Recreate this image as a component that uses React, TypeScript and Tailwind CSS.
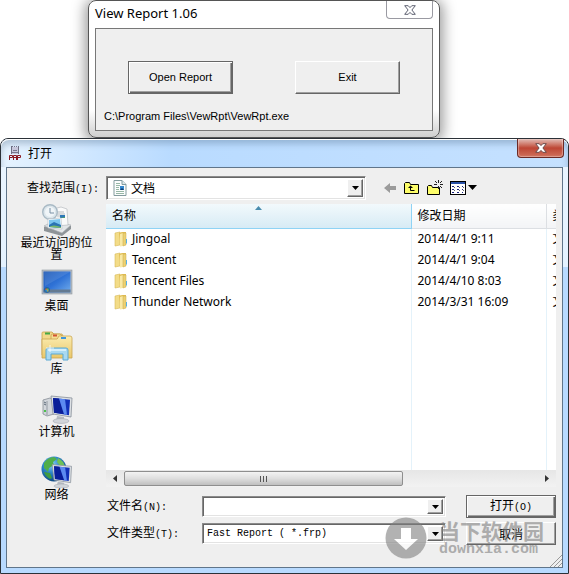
import { useState } from "react";
import type { ReactNode } from "react";

const folders = [
  { name: "Jingoal", date: "2014/4/1 9:11" },
  { name: "Tencent", date: "2014/4/1 9:04" },
  { name: "Tencent Files", date: "2014/4/10 8:03" },
  { name: "Thunder Network", date: "2014/3/31 16:09" },
];

const places = [
  { label: "最近访问的位置", icon: <RecentIcon /> },
  { label: "桌面", icon: <DesktopIcon /> },
  { label: "库", icon: <LibraryIcon /> },
  { label: "计算机", icon: <ComputerIcon /> },
  { label: "网络", icon: <NetworkIcon /> },
];

const raised =
  "border border-t-white border-l-white border-r-[#666] border-b-[#666] bg-[#efefef] shadow-[inset_-1px_-1px_0_#a0a0a0]";
const raisedDefault =
  "border border-[#666] bg-[#efefef] shadow-[inset_1px_1px_0_#fff,inset_-1px_-1px_0_#666,inset_-2px_-2px_0_#a0a0a0]";
const sunken =
  "border border-t-[#8a8a8a] border-l-[#8a8a8a] border-r-white border-b-white bg-white shadow-[inset_1px_1px_0_#666,inset_-1px_-1px_0_#e3e3e3]";

function RecentIcon() {
  return (
    <svg width="32" height="32" viewBox="0 0 32 32" className="shrink-0">
      <path d="M3 23 L11 19 L30 22 L30 25 L21 32 L3 27Z" fill="#8e9498" />
      <path d="M3 22 L11 18 L30 21 L21 29Z" fill="#e3e6e8" stroke="#a3a8ac" strokeWidth=".6" />
      <path d="M12 5 L20 3 L26 5 L27 21 L14 22Z" fill="#fafafa" stroke="#b8bcc0" strokeWidth=".7" />
      <path d="M16 8h7M16 10h8M16 12h8" stroke="#b5bbc0" />
      <path d="M19 11h5v3h-5z" fill="#2d78b8" />
      <path d="M19 14l5-1v1z" fill="#5ba35a" />
      <circle cx="9" cy="8" r="7.3" fill="#dbe5eb" stroke="#a9bac5" strokeWidth="1.4" />
      <circle cx="9" cy="8" r="5" fill="#f0f5f8" />
      <path d="M9 4v5h4" fill="none" stroke="#7890a5" strokeWidth="1" />
      <path d="M7 15 L20 14 L21 25 L7 24Z" fill="#fff" stroke="#b0bac2" strokeWidth=".6" />
      <path d="M8 16 L19 15 L20 24 L8 23Z" fill="#7cc6ef" />
      <path d="M8 21 L13 18 L20 21 L20 24 L8 23Z" fill="#2a74b3" />
      <path d="M8 23 Q12 20 20 23 L20 24Z" fill="#79b968" />
    </svg>
  );
}

function DesktopIcon() {
  return (
    <svg width="32" height="32" viewBox="0 0 32 32" className="shrink-0">
      <defs>
        <linearGradient id="desk" x1="0" y1="0" x2="1" y2="1">
          <stop offset="0" stopColor="#1d58b4" />
          <stop offset=".5" stopColor="#2f72d6" />
          <stop offset="1" stopColor="#71acec" />
        </linearGradient>
      </defs>
      <rect x="1" y="3" width="30" height="24" fill="#b6bcc4" stroke="#8e979f" strokeWidth=".6" />
      <rect x="2.5" y="4.5" width="27" height="21" fill="url(#desk)" />
      <path d="M3 5h26L4 19z" fill="#fff" opacity=".1" />
      <rect x="2.5" y="22.5" width="27" height="3" fill="#647a91" />
      <circle cx="6" cy="23" r="2.8" fill="#1b5c96" />
      <path d="M4.5 21.5h1.3V23H4.5z" fill="#f07432" />
      <path d="M6.2 21.5h1.3V23H6.2z" fill="#83cc48" />
      <path d="M4.5 23.3h1.3v1.2H4.5z" fill="#48b0f0" />
      <path d="M6.2 23.3h1.3v1.2H6.2z" fill="#fad440" />
    </svg>
  );
}

function LibraryIcon() {
  return (
    <svg width="32" height="32" viewBox="0 0 32 32" className="shrink-0">
      <defs>
        <linearGradient id="lib" x1="0" y1="0" x2="0" y2="1">
          <stop offset="0" stopColor="#fbecb0" />
          <stop offset="1" stopColor="#e9c76a" />
        </linearGradient>
      </defs>
      <path d="M1 3q0-1 1-1h9l2 2h8l1 2v19H1z" fill="#f2d98b" stroke="#c8a24a" strokeWidth=".8" />
      <rect x="4" y="2.5" width="5" height="2" fill="#45a845" />
      <path d="M10 6q0-2 1-2h8l2 2v18H10z" fill="#f6dd93" stroke="#c8a24a" strokeWidth=".8" />
      <rect x="12" y="4.5" width="4" height="2" fill="#d25434" />
      <path d="M17 8q0-2 1-2h11q2 0 2 2v20H1V9h15z" fill="url(#lib)" stroke="#c9a450" strokeWidth=".8" />
      <rect x="20" y="7" width="5" height="2" fill="#3f96dc" />
      <path d="M5 30V20q0-2 2-2h18q2 0 2 2v10h-5v-6H10v6z" fill="#a9d9f1" stroke="#5ba9d4" />
      <path d="M7 20h18" stroke="#e8f8ff" strokeWidth="1.4" />
      <path d="M9 15v7M5 18h8" stroke="#fff" opacity=".8" />
    </svg>
  );
}

function Monitor() {
  return (
    <g>
      <path d="M16 23l7 1v4h-8z" fill="#b5bac1" />
      <ellipse cx="20" cy="28" rx="8" ry="2.4" fill="#d1d5da" stroke="#a2a8b0" strokeWidth=".6" />
      <path d="M10 3l21 2-1 19-18-3z" fill="#dde1e5" stroke="#868e98" strokeWidth=".8" />
      <path d="M12 5l17 1.700-1 15.500-15-2.500z" fill="#1230b8" />
      <path d="M12 5l6 .6 5 15.500-10-1.400z" fill="#0a1e98" />
      <path d="M18 5.600l6 .6 2 15.500-3-.5z" fill="#5c8af0" />
    </g>
  );
}

function ComputerIcon() {
  return (
    <svg width="32" height="32" viewBox="0 0 32 32" className="shrink-0">
      <path d="M2 7l7-2 4 2v14l-7 2-4-2z" fill="#d2d6db" stroke="#868d95" strokeWidth=".8" />
      <path d="M6 8v14" stroke="#9299a2" />
      <path d="M3 9l2 1M3 11l2 1" stroke="#596775" />
      <rect x="3" y="17" width="2" height="2" fill="#4bc04b" />
      <Monitor />
    </svg>
  );
}

function NetworkIcon() {
  return (
    <svg width="32" height="32" viewBox="0 0 32 32" className="shrink-0">
      <defs>
        <radialGradient id="globe" cx=".4" cy=".3" r=".7">
          <stop offset="0" stopColor="#8bd3f8" />
          <stop offset=".5" stopColor="#2c84c8" />
          <stop offset="1" stopColor="#104a85" />
        </radialGradient>
      </defs>
      <circle cx="13" cy="13" r="12.5" fill="url(#globe)" />
      <path d="M3 7q4-6 10-6l3 2-4 3 1 3-5 3-1 4-4-4z" fill="#51ae49" />
      <path d="M17 2q6 3 7 9l-5-1-3-4z" fill="#6fc157" />
      <path d="M3 16l6 1 2 5-2 1q-5-3-6-7z" fill="#3f9b41" />
      <g transform="translate(2 6) scale(.92 .86)">
        <Monitor />
      </g>
    </svg>
  );
}

function FolderIcon() {
  return (
    <svg width="14" height="16" viewBox="0 0 14 16" className="shrink-0">
      <path d="M1 2l5-1v13l-5 1z" fill="#f3dc88" stroke="#d7b958" strokeWidth=".6" />
      <path d="M5 2l3-1h4v12l-5 2z" fill="#e2bf55" />
      <path d="M6 3l3-1v13l-3 .5z" fill="#f9e9a5" />
      <path d="M9 2h3v12l-3 1z" fill="#ecd173" stroke="#cbaa48" strokeWidth=".5" />
      <path d="M12 8h1v4l-1 1z" fill="#54aee5" />
    </svg>
  );
}

function DocumentIcon() {
  return (
    <svg width="14" height="16" viewBox="0 0 14 16" className="shrink-0">
      <path d="M1 .5h8l4 4v11H1z" fill="#fbfdfd" stroke="#839b9e" />
      <path d="M9 .5v4h4" fill="#dce8ea" stroke="#839b9e" />
      <path d="M3 3.500h4M3 5.500h4M3 7.500h3M3 9.500h3M3 11.500h8M3 13.500h8" stroke="#97b7a6" />
      <rect x="7" y="6" width="4" height="4" fill="#3487cc" />
      <path d="M7 10l2-2 2 2z" fill="#123d70" />
    </svg>
  );
}

function AppIcon() {
  return (
    <svg width="13" height="16" viewBox="0 0 13 16">
      <path d="M2 1h1v8H2zM9 1h1v8H9z" fill="#6f6f82" />
      <rect x="3" y="2" width="6" height="7" fill="#c8c8dc" />
      <path d="M3 1.500h1M5 1.500h1M7 1.500h1M3 7.500h6M4 5.500h4" stroke="#77778c" />
      <path
        d="M.5 15v-4.500h3v2h-3M4.500 15v-4.500h3V15M4.500 12.500h3M8.500 15v-4.500h3v2h-3"
        fill="none"
        stroke="#8b1820"
      />
    </svg>
  );
}

function BackIcon() {
  return (
    <svg width="13" height="12" viewBox="0 0 13 12">
      <path d="M0 6l6-5v3h6v4H6v3z" fill="#9b9b9b" />
    </svg>
  );
}

function UpIcon() {
  return (
    <svg width="16" height="14" viewBox="0 0 16 14">
      <path d="M.5 12.500v-10l1-1h4l1 2h8v9z" fill="#fdfd6a" stroke="#000" />
      <path d="M10.500 9.500h-4V6" fill="none" stroke="#000" />
      <path d="M4 7l2.500-2.500L9 7z" fill="#000" />
    </svg>
  );
}

function NewFolderIcon() {
  return (
    <svg width="16" height="16" viewBox="0 0 16 16">
      <path d="M.5 14.500v-8l1-1h3l1 2h7v7z" fill="#fdfd6a" stroke="#000" />
      <path d="M11.500 0v3M11.500 6v3M7 4.500h3M13 4.500h3M8 1l2 2M15 1l-2 2M13 6l2 2" stroke="#222" />
    </svg>
  );
}

function ViewIcon() {
  return (
    <svg width="28" height="14" viewBox="0 0 28 14">
      <rect x=".5" y=".5" width="15" height="13" fill="#fff" stroke="#000" />
      <rect x="1" y="1" width="14" height="2" fill="#2a52a8" />
      <path
        d="M2 5.500h2M7 5.500h2M12 5.500h1M2 8.500h2M7 8.500h2M12 8.500h1M2 11.500h2M7 11.500h2M12 11.500h1"
        stroke="#1a237e"
      />
      <path d="M4 6.500h1M9 6.500h1M13 6.500h1M4 9.500h1M9 9.500h1M13 9.500h1" stroke="#666" />
      <path d="M18 4h9l-4.500 5z" fill="#000" />
    </svg>
  );
}

function CloseMark({ stroke, fill }: { stroke: string; fill: string }) {
  return (
    <svg width="12" height="10" viewBox="0 0 12 10">
      <path
        d="M.7.700h3.500L6 2.600 7.800.7h3.500L7.900 5l3.400 4.300H7.800L6 7.400 4.200 9.300H.7L4.100 5z"
        fill={fill}
        stroke={stroke}
      />
    </svg>
  );
}

function DropArrow() {
  return (
    <span
      className={`pointer-events-none my-0.5 mr-0.5 flex w-4 shrink-0 items-center justify-center ${raised}`}
    >
      <svg width="7" height="4" viewBox="0 0 7 4">
        <path d="M0 0h7L3.500 4z" fill="#000" />
      </svg>
    </span>
  );
}

function Hot({ letter }: { letter: string }) {
  return <span className="font-['Liberation_Mono',monospace] text-[10px]">({letter})</span>;
}

function FieldLabel({ id, text, letter }: { id: string; text: string; letter: string }) {
  return (
    <label htmlFor={id} className="whitespace-nowrap">
      {text}
      <Hot letter={letter} />
      <span className="font-['Liberation_Mono',monospace] text-[10px]">:</span>
    </label>
  );
}

function IconButton({ label, children }: { label: string; children: ReactNode }) {
  return (
    <button type="button" aria-label={label}>
      {children}
    </button>
  );
}

function ReportWindow() {
  return (
    <section className="ml-[88px] flex h-[138px] w-[352px] flex-col rounded-lg border border-[#555] bg-linear-to-b from-white from-80% to-[#cfcfcf] px-1.5 pb-1.5 shadow-[0_2px_14px_3px_rgba(0,0,0,0.4)]">
      <header className="flex h-[27px] shrink-0 items-start justify-between">
        <h1 className="pt-1 font-['Noto_Sans',sans-serif] text-[13px] leading-4 text-black">
          View Report 1.06
        </h1>
        <button
          type="button"
          aria-label="Close"
          className="flex h-[18px] w-[47px] items-center justify-center rounded-b border border-t-0 border-[#9a9aa2]"
        >
          <CloseMark stroke="#5d6070" fill="#fff" />
        </button>
      </header>
      <div className="flex-1 border border-[#777] bg-[#efefef] px-2 pt-8 font-['Liberation_Sans',sans-serif] text-[11px] text-black">
        <div className="flex justify-between pr-6 pl-6">
          <button type="button" className={`h-[33px] w-[105px] ${raisedDefault}`}>
            Open Report
          </button>
          <button type="button" className={`h-[33px] w-[105px] ${raised}`}>
            Exit
          </button>
        </div>
        <p className="mt-3.5 leading-4 whitespace-nowrap">C:\Program Files\VewRpt\VewRpt.exe</p>
      </div>
    </section>
  );
}

function FileTable() {
  return (
    <div>
      <table className="h-[266px] w-full table-fixed border-collapse bg-white text-left font-['Noto_Sans','Noto_Sans_CJK_SC',sans-serif] text-[12px] leading-4 text-black">
        <colgroup>
          <col />
          <col className="w-[135px]" />
          <col className="w-[10px]" />
        </colgroup>
        <thead>
          <tr className="h-6">
            <th className="relative border-r border-b border-[#8fd3f5] bg-linear-to-b from-[#f2f9fc] to-[#d7ebf5] pl-1.5 font-normal">
              名称
              <svg width="7" height="4" viewBox="0 0 7 4" className="absolute top-0.5 left-[49%]">
                <path d="M0 4l3.500-4L7 4z" fill="#4a8cae" />
              </svg>
            </th>
            <th className="border-r border-b border-[#dcdfe3] bg-linear-to-b from-white to-[#f3f4f6] pl-1.5 font-normal">
              修改日期
            </th>
            <th className="overflow-hidden border-b border-[#dcdfe3] bg-linear-to-b from-white to-[#f3f4f6] pl-1.5 font-normal whitespace-nowrap">
              类型
            </th>
          </tr>
        </thead>
        <tbody>
          {folders.map((folder) => (
            <tr key={folder.name} className="h-[21px]">
              <td className="border-r border-[#e4f2fa] pl-2">
                <span className="flex items-center gap-1">
                  <FolderIcon />
                  {folder.name}
                </span>
              </td>
              <td className="border-r border-[#e4f2fa] pl-1.5">{folder.date}</td>
              <td className="overflow-hidden pl-1.5 whitespace-nowrap">文件夹</td>
            </tr>
          ))}
          <tr>
            <td className="border-r border-[#e4f2fa]" />
            <td className="border-r border-[#e4f2fa]" />
            <td />
          </tr>
        </tbody>
      </table>
      <div className="flex h-[17px] items-stretch bg-linear-to-b from-[#e6e6e6] to-[#f2f2f2]">
        <button type="button" aria-label="Scroll left" className="flex w-[18px] items-center justify-center">
          <svg width="4" height="7" viewBox="0 0 4 7">
            <path d="M4 0v7L0 3.500z" fill="#333" />
          </svg>
        </button>
        <div className="flex-1">
          <div className="my-px flex h-[15px] w-[67.5%] items-center justify-center gap-0.5 rounded-xs border border-[#8e8e8e] bg-linear-to-b from-[#f3f3f3] via-[#dedede] to-[#bfbfbf]">
            <span className="h-1.5 w-px bg-[#555]" />
            <span className="h-1.5 w-px bg-[#555]" />
            <span className="h-1.5 w-px bg-[#555]" />
          </div>
        </div>
        <button type="button" aria-label="Scroll right" className="flex w-[18px] items-center justify-center">
          <svg width="4" height="7" viewBox="0 0 4 7">
            <path d="M0 0v7l4-3.500z" fill="#333" />
          </svg>
        </button>
      </div>
    </div>
  );
}

function Watermark() {
  return (
    <div className="pointer-events-none absolute right-6 bottom-3.5 flex items-center gap-3 text-[#808080] opacity-60">
      <svg width="42" height="42" viewBox="0 0 42 42">
        <circle cx="21" cy="21" r="20.500" fill="currentColor" />
        <path d="M16 11h10v11h7L21 33 9 22h7z" fill="#fff" />
      </svg>
      <div>
        <p className="font-['Noto_Sans_CJK_SC',sans-serif] text-[21px] leading-6 font-bold">当下软件园</p>
        <p className="font-['Liberation_Mono',monospace] text-[15px] leading-4 font-bold">downxia.com</p>
      </div>
    </div>
  );
}

function OpenDialog() {
  const [fileName, setFileName] = useState("");

  return (
    <section className="relative rounded-t-lg border border-[#2b3138] bg-linear-to-b from-[#eaf5ff] from-0% via-[#e4f2ff] via-[128px] to-[#b8daff] to-[128px] px-[5px] pb-[5px] font-['Noto_Sans_CJK_SC',sans-serif] text-[12px] leading-4 text-black">
      <header className="-mx-[5px] flex h-7 items-start justify-between rounded-t-lg bg-linear-to-r from-[#e6f3ff] via-[#b9dbff] via-30% to-[#c5e1ff] pr-1 pl-2 shadow-[inset_0_1px_0_#fff,inset_0_5px_6px_rgba(60,90,120,0.3)]">
        <h2 className="flex items-center gap-1.5 pt-1.5">
          <AppIcon />
          打开
        </h2>
        <button
          type="button"
          aria-label="关闭"
          className="flex h-[19px] w-[47px] items-center justify-center rounded-b border border-t-0 border-[#6b2a26] bg-linear-to-b from-[#dba69d] from-10% via-[#bd4534] via-50% to-[#cf705c] shadow-[inset_0_0_1px_1px_rgba(255,255,255,0.35)]"
        >
          <CloseMark stroke="#6b4a4a" fill="#fff" />
        </button>
      </header>

      <div className="border border-[#60758a] bg-[#efefef] pr-1.5 pb-[22px]">
        <div className="flex items-center pt-2 pb-1">
          <div className="w-[99px] shrink-0 pl-5">
            <FieldLabel id="look-in" text="查找范围" letter="I" />
          </div>
          <div className={`flex h-6 w-[260px] items-stretch ${sunken}`}>
            <span className="flex items-center pl-1.5">
              <DocumentIcon />
            </span>
            <select id="look-in" className="min-w-0 flex-1 appearance-none bg-transparent pl-1 outline-none">
              <option>文档</option>
            </select>
            <DropArrow />
          </div>
          <div className="flex items-center gap-[7px] pl-[18px]">
            <IconButton label="后退">
              <BackIcon />
            </IconButton>
            <IconButton label="向上一级">
              <UpIcon />
            </IconButton>
            <IconButton label="新建文件夹">
              <NewFolderIcon />
            </IconButton>
            <IconButton label="查看">
              <ViewIcon />
            </IconButton>
          </div>
        </div>

        <div className="flex items-start">
          <nav className="-mb-[22px] w-[99px] shrink-0">
            {places.map((place) => (
              <button
                key={place.label}
                type="button"
                className="mx-auto flex h-[63px] w-[74px] flex-col items-center justify-start leading-3"
              >
                {place.icon}
                {place.label}
              </button>
            ))}
          </nav>

          <div className="min-w-0 flex-1">
            <FileTable />
            <form
              className="grid grid-cols-[95px_1fr_90px] items-center gap-y-1 pt-2 pl-px"
              onSubmit={(e) => e.preventDefault()}
            >
              <FieldLabel id="file-name" text="文件名" letter="N" />
              <div className={`mr-5 flex h-[21px] items-stretch ${sunken}`}>
                <input
                  id="file-name"
                  value={fileName}
                  onChange={(e) => setFileName(e.target.value)}
                  className="min-w-0 flex-1 bg-transparent px-1 outline-none"
                />
                <DropArrow />
              </div>
              <button type="submit" className={`h-[23px] ${raisedDefault}`}>
                打开
                <Hot letter="O" />
              </button>

              <FieldLabel id="file-type" text="文件类型" letter="T" />
              <div className={`mr-5 flex h-[21px] items-stretch ${sunken}`}>
                <select
                  id="file-type"
                  className="min-w-0 flex-1 appearance-none bg-transparent pl-1 font-['Liberation_Mono',monospace] text-[10px] outline-none"
                >
                  <option>Fast Report ( *.frp)</option>
                </select>
                <DropArrow />
              </div>
              <button type="button" className={`h-[23px] ${raised}`}>
                取消
              </button>
            </form>
          </div>
        </div>
      </div>

      <svg width="12" height="12" viewBox="0 0 12 12" className="absolute right-1.5 bottom-1.5">
        <path d="M0 12L12 0M4 12l8-8M8 12l4-4" stroke="#999" />
      </svg>
      <Watermark />
    </section>
  );
}

export default function App() {
  return (
    <main className="overflow-hidden bg-white">
      <ReportWindow />
      <OpenDialog />
    </main>
  );
}
